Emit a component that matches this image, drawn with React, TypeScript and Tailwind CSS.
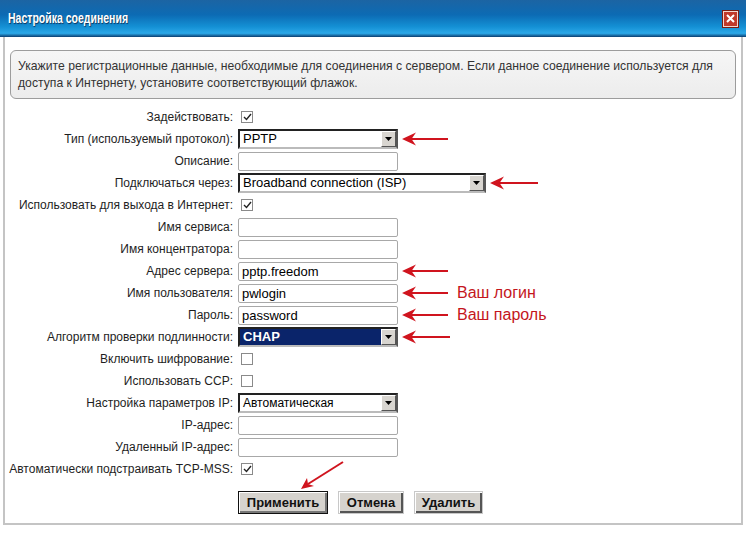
import React from 'react';

const RED = '#d0141e';

function Arrow({ w = 46 }: { w?: number }) {
  return (
    <svg width={w} height="14" viewBox={`0 0 ${w} 14`} className="shrink-0">
      <line x1="8" y1="7" x2={w} y2="7" stroke={RED} strokeWidth="2.2" />
      <path d="M0 7 L14 0.5 L9.5 7 L14 13.5 Z" fill={RED} />
    </svg>
  );
}

function TextBox({ value = '', w = 'w-[160px]' }: { value?: string; w?: string }) {
  return (
    <div
      className={`${w} h-[19px] border border-[#a8a8a8] rounded-[2px] bg-white px-[3px] text-[13px] leading-[17px] text-black`}
    >
      {value}
    </div>
  );
}

function Select({
  value,
  w = 'w-[160px]',
  selected = false,
  small = false,
}: {
  value: string;
  w?: string;
  selected?: boolean;
  small?: boolean;
}) {
  return (
    <div
      className={`${w} h-[20px] flex items-center border-2 border-t-[#222] border-l-[#222] border-r-[#555] border-b-[#bbb] bg-white`}
    >
      <div
        className={`flex-1 h-full px-[3px] leading-[16px] ${small ? 'text-[12px]' : 'text-[13px]'} ${
          selected ? 'bg-[#0a246a] text-white font-bold' : 'text-black'
        }`}
      >
        {value}
      </div>
      <div className="w-[15px] h-[16px] bg-[#d8d5d0] border border-t-white border-l-white border-r-[#555] border-b-[#555] flex items-center justify-center">
        <svg width="7" height="4" viewBox="0 0 7 4">
          <path d="M0 0 L7 0 L3.5 4 Z" fill="#000" />
        </svg>
      </div>
    </div>
  );
}

function Check({ on = false }: { on?: boolean }) {
  return (
    <div className="ml-[3px] w-[12px] h-[12px] border border-[#8a8a8a] bg-white flex items-center justify-center">
      {on && (
        <svg width="9" height="8" viewBox="0 0 9 8">
          <path d="M1 4 L3.5 6.5 L8 1" stroke="#222" strokeWidth="1.4" fill="none" />
        </svg>
      )}
    </div>
  );
}

function Row({ label, children }: { label: string; children: React.ReactNode }) {
  return (
    <div className="flex items-center h-[22px]">
      <div className="w-[229px] text-right text-[12px] text-[#1e1e1e] whitespace-nowrap">{label}:</div>
      <div className="ml-[5px] flex items-center gap-[4px]">{children}</div>
    </div>
  );
}

function Btn({ label, w, focus = false }: { label: string; w: string; focus?: boolean }) {
  return (
    <div
      className={`${w} h-[23px] flex items-center justify-center text-[13px] font-bold text-[#111] bg-[#d6d3ce] border ${
        focus ? 'border-[#111] shadow-[inset_1px_1px_0_#fff,inset_-2px_-2px_0_#777]' : 'border-[#c8c8c8] shadow-[inset_1px_1px_0_#fff,inset_-2px_-2px_0_#555]'
      }`}
    >
      {label}
    </div>
  );
}

export default function App() {
  return (
    <div
      className="relative w-[746px] h-[534px] bg-white overflow-hidden"
      style={{ fontFamily: '"Liberation Sans", Arial, sans-serif' }}
    >
      <div className="h-[37px] flex items-center justify-between pl-[8px] pr-[8px] bg-[linear-gradient(180deg,#1c64a3_0%,#0c6bb4_40%,#1490d4_72%,#2ba8e8_90%,#0b3d70_100%)]">
        <div className="text-white font-bold text-[15px] scale-x-[0.7] origin-left [text-shadow:1px_1px_1px_#0a3560]">
          Настройка соединения
        </div>
        <div className="w-[15px] h-[16px] bg-[#c0392b] border border-[#f3d6cf] flex items-center justify-center shadow-[0_0_0_1px_#7a1c12]">
          <svg width="9" height="9" viewBox="0 0 9 9">
            <path d="M1 1 L8 8 M8 1 L1 8" stroke="#fff" strokeWidth="2" />
          </svg>
        </div>
      </div>

      <div className="mx-[3px] h-[488px] pt-[13px] border-x-2 border-b-2 border-[#c4c4c4]">
        <div className="mx-[5px] h-[49px] rounded-[6px] border border-[#9c9c9c] bg-[linear-gradient(180deg,#f6f6f6,#ececec)] px-[7px] pt-[7px] text-[12.2px] leading-[17px] text-[#333]">
          Укажите регистрационные данные, необходимые для соединения с сервером. Если данное соединение используется для
          доступа к Интернету, установите соответствующий флажок.
        </div>

        <div className="mt-[7px] -ml-[1px]">
          <Row label="Задействовать">
            <Check on />
          </Row>
          <Row label="Тип (используемый протокол)">
            <Select value="PPTP" />
            <Arrow />
          </Row>
          <Row label="Описание">
            <TextBox />
          </Row>
          <Row label="Подключаться через">
            <Select value="Broadband connection (ISP)" w="w-[248px]" />
            <Arrow w={48} />
          </Row>
          <Row label="Использовать для выхода в Интернет">
            <Check on />
          </Row>
          <Row label="Имя сервиса">
            <TextBox />
          </Row>
          <Row label="Имя концентратора">
            <TextBox />
          </Row>
          <Row label="Адрес сервера">
            <TextBox value="pptp.freedom" />
            <Arrow w={46} />
          </Row>
          <Row label="Имя пользователя">
            <TextBox value="pwlogin" />
            <Arrow w={46} />
            <span className="ml-[5px] text-[16px] text-[#c4161c] leading-none">Ваш логин</span>
          </Row>
          <Row label="Пароль">
            <TextBox value="password" />
            <Arrow w={46} />
            <span className="ml-[5px] text-[16px] text-[#c4161c] leading-none">Ваш пароль</span>
          </Row>
          <Row label="Алгоритм проверки подлинности">
            <Select value="CHAP" selected />
            <Arrow w={48} />
          </Row>
          <Row label="Включить шифрование">
            <Check />
          </Row>
          <Row label="Использовать CCP">
            <Check />
          </Row>
          <Row label="Настройка параметров IP">
            <Select value="Автоматическая" small />
          </Row>
          <Row label="IP-адрес">
            <TextBox />
          </Row>
          <Row label="Удаленный IP-адрес">
            <TextBox />
          </Row>
          <Row label="Автоматически подстраивать TCP-MSS">
            <Check on />
          </Row>
        </div>

        <div className="mt-[11px] ml-[233px] flex gap-[10px]">
          <Btn label="Применить" w="w-[90px]" focus />
          <Btn label="Отмена" w="w-[66px]" />
          <Btn label="Удалить" w="w-[69px]" />
        </div>
      </div>

      <svg className="absolute left-[296px] top-[458px]" width="52" height="34" viewBox="0 0 52 34">
        <line x1="47" y1="4" x2="12" y2="26" stroke={RED} strokeWidth="2" />
        <path d="M5 31 L11 20 L12 26 L18 28 Z" fill={RED} />
      </svg>
    </div>
  );
}
